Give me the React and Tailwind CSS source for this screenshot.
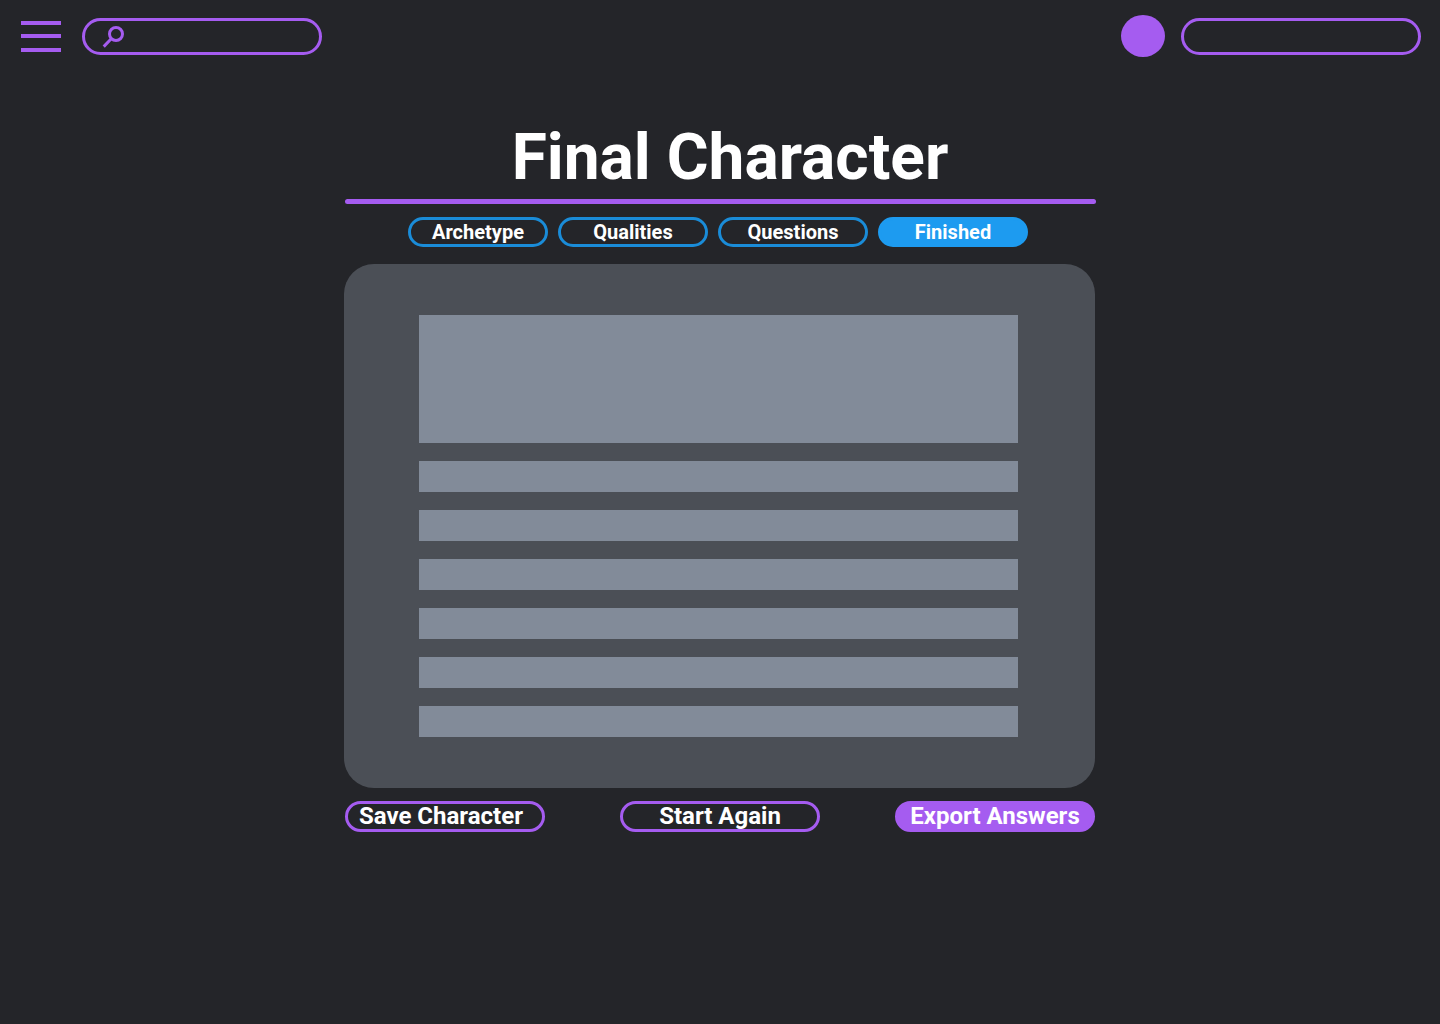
import React, { useState } from 'react';
import clsx from 'clsx';

const steps = [
  { name: 'Archetype', width: 'w-[140px]' },
  { name: 'Qualities', width: 'w-[150px]' },
  { name: 'Questions', width: 'w-[150px]' },
  { name: 'Finished', width: 'w-[150px]' },
];

const answerRows = [1, 2, 3, 4, 5, 6];

const Header = () => {
  const [search, setSearch] = useState('');

  return (
    <header className="flex justify-between pt-[15px] pl-[21px] pr-[19px]">
      <div className="flex items-center gap-[21px]">
        <button type="button" aria-label="Menu" className="text-[#a55cf0] cursor-pointer">
          <svg width="40" height="31" viewBox="0 0 40 31" fill="currentColor" className="block">
            <rect y="0" width="40" height="4" />
            <rect y="13" width="40" height="4" />
            <rect y="27" width="40" height="4" />
          </svg>
        </button>
        <label className="my-[3px] flex h-[37px] w-60 items-center gap-2 rounded-full border-3 border-[#a55cf0] pl-4 pr-4">
          <svg width="25" height="25" viewBox="0 0 25 25" fill="none" stroke="#a55cf0" strokeWidth="3" className="shrink-0">
            <circle cx="15" cy="10" r="6.5" />
            <path d="M10.5 14.5 L2.7 22.6" />
          </svg>
          <input
            type="search"
            aria-label="Search"
            value={search}
            onChange={(e) => setSearch(e.target.value)}
            className="w-full min-w-0 bg-transparent text-base text-white outline-none"
          />
        </label>
      </div>

      <div className="flex items-start gap-4">
        <button type="button" aria-label="Profile" className="h-[42px] w-11 rounded-[50%] bg-[#a55cf0] cursor-pointer" />
        <button type="button" aria-label="Account" className="my-[3px] h-[37px] w-60 rounded-full border-3 border-[#a55cf0] cursor-pointer" />
      </div>
    </header>
  );
};

const ActionButton = ({ children, filled, className }) => (
  <button
    type="button"
    className={clsx(
      'flex h-[31px] w-[200px] items-center justify-center rounded-full border-3 border-[#a55cf0] text-2xl leading-[25px] font-bold whitespace-nowrap cursor-pointer',
      filled && 'bg-[#a55cf0]',
      className
    )}
  >
    {children}
  </button>
);

const App = () => {
  const [activeStep, setActiveStep] = useState('Finished');

  return (
    <div className="min-h-screen bg-[#242529] font-[Roboto,sans-serif] text-white">
      <Header />

      <main className="mx-auto mt-[61px] max-w-[752px]">
        <h1 className="pl-5 text-center text-[64px] leading-[78px] font-bold">Final Character</h1>
        <hr className="mt-[2px] ml-px h-[5px] rounded-full border-0 bg-[#a55cf0]" />

        <nav className="mt-[13px] flex flex-wrap justify-center gap-[10px] pr-1">
          {steps.map((step) => (
            <button
              key={step.name}
              type="button"
              onClick={() => setActiveStep(step.name)}
              className={clsx(
                'flex h-[30px] items-center justify-center rounded-full border-3 text-xl font-bold cursor-pointer',
                step.width,
                activeStep === step.name ? 'border-[#1d9bf0] bg-[#1d9bf0]' : 'border-[#1a8cd8]'
              )}
            >
              {step.name}
            </button>
          ))}
        </nav>

        <section className="mt-[17px] mr-px flex flex-col gap-[18px] rounded-[30px] bg-[#4b4f56] py-[51px] pl-[75px] pr-[77px]">
          <div className="h-32 bg-[#828b99]" />
          {answerRows.map((row) => (
            <div key={row} className="h-[31px] bg-[#828b99]" />
          ))}
        </section>

        <div className="mt-[13px] flex flex-wrap justify-between gap-3 px-px">
          <ActionButton className="pr-2">Save Character</ActionButton>
          <ActionButton>Start Again</ActionButton>
          <ActionButton filled>Export Answers</ActionButton>
        </div>
      </main>
    </div>
  );
};

export default App;
